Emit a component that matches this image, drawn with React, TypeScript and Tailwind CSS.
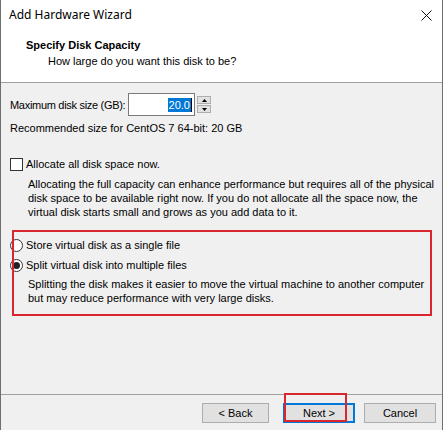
import React from "react";

const F = "font-['Liberation_Sans',Arial,sans-serif]";

export default function App() {
  return (
    <div className={`w-[444px] h-[430px] bg-white text-black ${F}`}>
      <div className="w-[443px] h-[430px] border-x border-[#6f6f6f] bg-[#f0f0f0] flex flex-col">
        {/* Title bar */}
        <div className="h-[30px] bg-white flex items-center justify-between pl-[8px] pr-[9px]">
          <span className="text-[12px] leading-[16px] font-['Noto_Sans',sans-serif] text-black">Add Hardware Wizard</span>
          <svg width="11" height="11" viewBox="0 0 11 11" className="mr-[1px]">
            <path d="M0.5 0.5 L10.5 10.5 M10.5 0.5 L0.5 10.5" stroke="#111" strokeWidth="1" />
          </svg>
        </div>
        {/* Header */}
        <div className="h-[52px] bg-white pl-[25px] pt-[8px]">
          <div className="font-bold text-[11px] leading-[14px]">Specify Disk Capacity</div>
          <div className="pl-[22px] text-[11px] leading-[14px] mt-[2px]">How large do you want this disk to be?</div>
        </div>
        <div className="h-px bg-[#a0a0a0]" />

        {/* Body */}
        <div className="pl-[9px] pr-[6px] text-[11px] leading-[14px] flex flex-col">
          <div className="mt-[10px] flex items-center h-[23px]">
            <span className="w-[118px] shrink-0 whitespace-nowrap tracking-[-0.3px]">Maximum disk size (GB):</span>
            <div className="w-[67px] h-[23px] bg-white border border-[#7a7a7a] flex items-center justify-end pr-[2px]">
              <span className="bg-[#0078d7] text-white px-[1px] leading-[14px]">20.0</span>
              <span className="w-px h-[14px] bg-black" />
            </div>
            <div className="ml-[2px] flex flex-col gap-[1px]">
              <div className="w-[14px] h-[8px] bg-[#e1e1e1] border border-[#adadad] flex items-center justify-center">
                <svg width="5" height="3" viewBox="0 0 5 3"><path d="M2.5 0 L5 3 L0 3 Z" fill="#000" /></svg>
              </div>
              <div className="w-[14px] h-[8px] bg-[#e1e1e1] border border-[#adadad] flex items-center justify-center">
                <svg width="5" height="3" viewBox="0 0 5 3"><path d="M0 0 L5 0 L2.5 3 Z" fill="#000" /></svg>
              </div>
            </div>
          </div>

          <div className="mt-[5px] whitespace-nowrap">Recommended size for CentOS 7 64-bit: 20 GB</div>

          <div className="mt-[22px] flex items-center h-[14px]">
            <div className="w-[13px] h-[13px] bg-white border border-[#333]" />
            <span className="ml-[3px]">Allocate all disk space now.</span>
          </div>
          <div className="mt-[6px] pl-[18px] whitespace-nowrap">
            <div>Allocating the full capacity can enhance performance but requires all of the physical</div>
            <div>disk space to be available right now. If you do not allocate all the space now, the</div>
            <div>virtual disk starts small and grows as you add data to it.</div>
          </div>

          <div className="relative mt-[19px]">
            <div className="flex items-center h-[14px]">
              <div className="w-[13px] h-[13px] rounded-full bg-white border border-[#333]" />
              <span className="ml-[3px]">Store virtual disk as a single file</span>
            </div>
            <div className="mt-[6px] flex items-center h-[14px]">
              <div className="w-[13px] h-[13px] rounded-full bg-white border border-[#333] flex items-center justify-center">
                <div className="w-[7px] h-[7px] rounded-full bg-[#222]" />
              </div>
              <span className="ml-[3px]">Split virtual disk into multiple files</span>
            </div>
            <div className="mt-[5px] pl-[18px] whitespace-nowrap">
              <div>Splitting the disk makes it easier to move the virtual machine to another computer</div>
              <div>but may reduce performance with very large disks.</div>
            </div>
            <div className="absolute left-[2px] top-[-8px] w-[420px] h-[86px] border-2 border-[#d9262f] pointer-events-none" />
          </div>
        </div>

        <div className="flex-1" />
        <div className="h-px bg-[#a0a0a0]" />
        {/* Footer */}
        <div className="h-[35px] relative">
          <div className="flex pt-[8px] text-[11px]">
            <div className="ml-[201px] w-[67px] h-[20px] bg-[#e1e1e1] border border-[#adadad] flex items-center justify-center">&lt; Back</div>
            <div className="ml-[14px] w-[72px] h-[20px] bg-[#e1e1e1] border-2 border-[#0078d7] flex items-center justify-center">Next &gt;</div>
            <div className="ml-[9px] w-[72px] h-[20px] bg-[#e1e1e1] border border-[#adadad] flex items-center justify-center">Cancel</div>
          </div>
          <div className="absolute left-[283px] top-[-2px] w-[63px] h-[29px] border-2 border-[#d9262f]" />
        </div>
      </div>
    </div>
  );
}
